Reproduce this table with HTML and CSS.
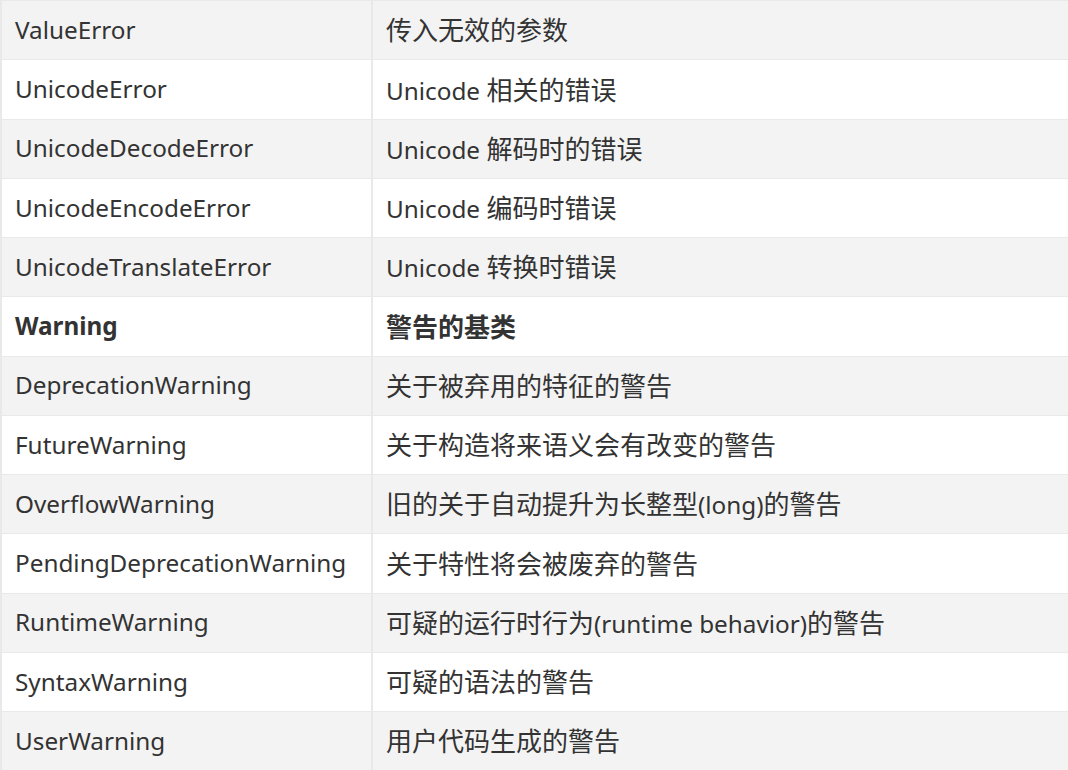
FILE: index.html
```html
<!DOCTYPE html>
<html lang="zh-CN">
<head>
<meta charset="utf-8">
<title>Python 异常</title>
<link rel="stylesheet" href="styles.css">
</head>
<body>
<table class="exc-table">
  <tbody>
    <tr><td>ValueError</td><td><span class="zh">传入无效的参数</span></td></tr>
    <tr><td>UnicodeError</td><td>Unicode <span class="zh">相关的错误</span></td></tr>
    <tr><td>UnicodeDecodeError</td><td>Unicode <span class="zh">解码时的错误</span></td></tr>
    <tr><td>UnicodeEncodeError</td><td>Unicode <span class="zh">编码时错误</span></td></tr>
    <tr><td>UnicodeTranslateError</td><td>Unicode <span class="zh">转换时错误</span></td></tr>
    <tr class="strong"><td>Warning</td><td><span class="zh">警告的基类</span></td></tr>
    <tr><td>DeprecationWarning</td><td><span class="zh">关于被弃用的特征的警告</span></td></tr>
    <tr><td>FutureWarning</td><td><span class="zh">关于构造将来语义会有改变的警告</span></td></tr>
    <tr><td>OverflowWarning</td><td><span class="zh">旧的关于自动提升为长整型</span>(long)<span class="zh">的警告</span></td></tr>
    <tr><td>PendingDeprecationWarning</td><td><span class="zh">关于特性将会被废弃的警告</span></td></tr>
    <tr><td>RuntimeWarning</td><td><span class="zh">可疑的运行时行为</span>(runtime behavior)<span class="zh">的警告</span></td></tr>
    <tr><td>SyntaxWarning</td><td><span class="zh">可疑的语法的警告</span></td></tr>
    <tr><td>UserWarning</td><td><span class="zh">用户代码生成的警告</span></td></tr>
  </tbody>
</table>
</body>
</html>
```
FILE: styles.css
```css
html, body {
  margin: 0;
  padding: 0;
  background: #ffffff;
  overflow: hidden;
}
body {
  font-family: "Noto Sans", "Noto Sans CJK SC", sans-serif;
  font-size: 24.3px;
  color: #333333;
}
.zh {
  font-family: "Noto Sans CJK SC", sans-serif;
  font-size: 26px;
}
.exc-table {
  border-collapse: collapse;
  width: 1080px;
  table-layout: fixed;
}
.exc-table td {
  height: 58.25px;
  padding: 0 13px;
  border: 1px solid #e9e9e9;
  border-left-width: 2px;
  vertical-align: middle;
  white-space: nowrap;
  line-height: 1.1;
}
.exc-table td:first-child {
  width: 343px;
}
.exc-table tr:nth-child(odd) td {
  background: #f3f3f3;
}
.exc-table tr.strong td {
  font-weight: 700;
}
```
